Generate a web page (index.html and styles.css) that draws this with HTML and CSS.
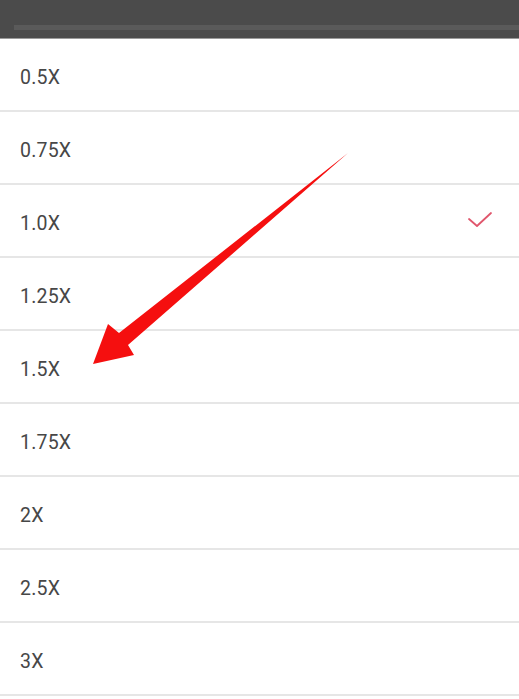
FILE: index.html
```html
<!DOCTYPE html>
<html>
<head>
<meta charset="utf-8">
<link rel="stylesheet" href="styles.css">
</head>
<body>
<div class="page">
  <div class="header"><div class="header-strip"></div></div>
  <ul class="list">
    <li class="row">0.5X</li>
    <li class="row">0.75X</li>
    <li class="row">1.0X<svg class="check" width="26" height="18" viewBox="0 0 26 18"><polyline points="2,8 10,15 24,2" fill="none" stroke="#e0566c" stroke-width="1.8" stroke-linecap="round" stroke-linejoin="round"/></svg></li>
    <li class="row">1.25X</li>
    <li class="row">1.5X</li>
    <li class="row">1.75X</li>
    <li class="row">2X</li>
    <li class="row">2.5X</li>
    <li class="row">3X</li>
  </ul>
  <svg class="arrow" width="519" height="699" viewBox="0 0 519 699">
    <polygon points="348,153 119,333 108,324 93,364 134,355 128,345" fill="#f50f0f"/>
  </svg>
</div>
</body>
</html>
```
FILE: styles.css
```css
html, body {
  margin: 0;
  padding: 0;
  background: #ffffff;
}
.page {
  position: relative;
  width: 519px;
  height: 699px;
  overflow: hidden;
  font-family: Roboto, "Liberation Sans", sans-serif;
}
.header {
  height: 38px;
  background: #4b4b4b;
  border-bottom: 1px solid #9a9a9a;
  display: flex;
  flex-direction: column;
  justify-content: flex-end;
}
.header-strip {
  height: 5px;
  margin: 0 0 8px 14px;
  background: #5a5a5a;
}
.list {
  list-style: none;
  margin: 0;
  padding: 0;
}
.row {
  box-sizing: border-box;
  height: 73px;
  border-bottom: 2px solid #e6e6e6;
  display: flex;
  align-items: center;
  justify-content: space-between;
  padding: 5px 26px 0 20px;
  font-size: 19.5px;
  color: #474747;
  letter-spacing: 0.2px;
}
.check {
  display: block;
  margin-top: -6px;
}
.arrow {
  position: absolute;
  left: 0;
  top: 0;
  pointer-events: none;
}
```
